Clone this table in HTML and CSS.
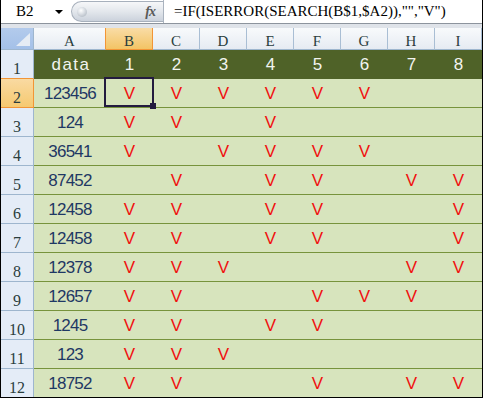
FILE: index.html
```html
<!DOCTYPE html>
<html>
<head>
<meta charset="utf-8">
<link rel="stylesheet" href="styles.css">
</head>
<body>
<div class="window">
  <div class="fbar">
    <div class="namebox"><span class="name">B2</span><span class="arrow"></span></div>
    <div class="pill"><span class="knob"></span><span class="fx">fx</span></div>
    <div class="formula">=IF(ISERROR(SEARCH(B$1,$A2)),"","V")</div>
  </div>
  <div class="band"></div>
  <div class="sheet">
    <div class="corner"></div>
    <div class="ch ch-a">A</div><div class="ch ch-sel">B</div><div class="ch">C</div><div class="ch">D</div><div class="ch">E</div><div class="ch">F</div><div class="ch">G</div><div class="ch">H</div><div class="ch">I</div>

    <div class="rh rh-1">1</div>
    <div class="c hd hd-data">data</div><div class="c hd">1</div><div class="c hd">2</div><div class="c hd">3</div><div class="c hd">4</div><div class="c hd">5</div><div class="c hd">6</div><div class="c hd">7</div><div class="c hd">8</div>

    <div class="rh rh-sel">2</div>
    <div class="c a">123456</div><div class="c v active">V</div><div class="c v">V</div><div class="c v">V</div><div class="c v">V</div><div class="c v">V</div><div class="c v">V</div><div class="c"></div><div class="c"></div>

    <div class="rh">3</div>
    <div class="c a">124</div><div class="c v">V</div><div class="c v">V</div><div class="c"></div><div class="c v">V</div><div class="c"></div><div class="c"></div><div class="c"></div><div class="c"></div>

    <div class="rh">4</div>
    <div class="c a">36541</div><div class="c v">V</div><div class="c"></div><div class="c v">V</div><div class="c v">V</div><div class="c v">V</div><div class="c v">V</div><div class="c"></div><div class="c"></div>

    <div class="rh">5</div>
    <div class="c a">87452</div><div class="c"></div><div class="c v">V</div><div class="c"></div><div class="c v">V</div><div class="c v">V</div><div class="c"></div><div class="c v">V</div><div class="c v">V</div>

    <div class="rh">6</div>
    <div class="c a">12458</div><div class="c v">V</div><div class="c v">V</div><div class="c"></div><div class="c v">V</div><div class="c v">V</div><div class="c"></div><div class="c"></div><div class="c v">V</div>

    <div class="rh">7</div>
    <div class="c a">12458</div><div class="c v">V</div><div class="c v">V</div><div class="c"></div><div class="c v">V</div><div class="c v">V</div><div class="c"></div><div class="c"></div><div class="c v">V</div>

    <div class="rh">8</div>
    <div class="c a">12378</div><div class="c v">V</div><div class="c v">V</div><div class="c v">V</div><div class="c"></div><div class="c"></div><div class="c"></div><div class="c v">V</div><div class="c v">V</div>

    <div class="rh">9</div>
    <div class="c a">12657</div><div class="c v">V</div><div class="c v">V</div><div class="c"></div><div class="c"></div><div class="c v">V</div><div class="c v">V</div><div class="c v">V</div><div class="c"></div>

    <div class="rh">10</div>
    <div class="c a">1245</div><div class="c v">V</div><div class="c v">V</div><div class="c"></div><div class="c v">V</div><div class="c v">V</div><div class="c"></div><div class="c"></div><div class="c"></div>

    <div class="rh">11</div>
    <div class="c a">123</div><div class="c v">V</div><div class="c v">V</div><div class="c v">V</div><div class="c"></div><div class="c"></div><div class="c"></div><div class="c"></div><div class="c"></div>

    <div class="rh">12</div>
    <div class="c a">18752</div><div class="c v">V</div><div class="c v">V</div><div class="c"></div><div class="c"></div><div class="c v">V</div><div class="c"></div><div class="c v">V</div><div class="c v">V</div>
  </div>
</div>
</body>
</html>
```

FILE: styles.css
```css
html, body {
  margin: 0;
  padding: 0;
  background: #ffffff;
}

.window {
  box-sizing: border-box;
  width: 483px;
  height: 398px;
  border-left: 1px solid #000;
  border-right: 1px solid #000;
  border-bottom: 1px solid #000;
  overflow: hidden;
  background: #ffffff;
}

/* formula bar */
.fbar {
  display: flex;
  height: 24px;
  box-sizing: border-box;
  border-bottom: 1px solid #8d949d;
  background: #ffffff;
}

.namebox {
  display: flex;
  align-items: center;
  width: 70px;
  flex: none;
  padding-left: 15px;
  box-sizing: border-box;
}

.name {
  font-family: "Liberation Serif", serif;
  font-size: 15px;
  line-height: 23px;
  color: #000;
}

.arrow {
  margin-left: auto;
  margin-right: 8px;
  width: 0;
  height: 0;
  border-left: 4px solid transparent;
  border-right: 4px solid transparent;
  border-top: 4px solid #000;
}

.pill {
  display: flex;
  align-items: center;
  justify-content: space-between;
  flex: none;
  width: 92px;
  height: 21px;
  margin-top: 1px;
  box-sizing: border-box;
  border: 1px solid #a7b0bc;
  border-right: none;
  border-radius: 11px 0 0 11px;
  background: linear-gradient(#f6f7f9, #e3e7ec 50%, #cbd2dc);
  padding: 0 8px 0 5px;
}

.knob {
  width: 10px;
  height: 10px;
  border-radius: 50%;
  background: radial-gradient(circle at 40% 35%, #ffffff 0%, #dfe3e8 35%, #a3acb7 100%);
}

.fx {
  font-family: "Liberation Serif", serif;
  font-style: italic;
  font-weight: bold;
  font-size: 14px;
  color: #5a5a5a;
  letter-spacing: -1px;
}

.formula {
  flex: 1;
  border-left: 1px solid #aab3bf;
  padding-left: 10px;
  font-family: "Liberation Serif", serif;
  font-size: 15px;
  line-height: 23px;
  color: #000;
  white-space: nowrap;
  overflow: hidden;
}

.band {
  height: 4px;
  background: #dfe3e9;
}

/* sheet grid */
.sheet {
  display: grid;
  grid-template-columns: 33px 72px repeat(8, 47px);
  grid-template-rows: 22px repeat(12, 29px);
}

.corner {
  position: relative;
  box-sizing: border-box;
  border-right: 1px solid #9eb6ce;
  border-bottom: 1px solid #9eb6ce;
  background: linear-gradient(#b3cbec, #a4c0e8);
}

.corner::after {
  content: "";
  position: absolute;
  right: 3px;
  bottom: 3px;
  width: 0;
  height: 0;
  border-left: 14px solid transparent;
  border-bottom: 13px solid #e6ecf4;
}

.ch {
  box-sizing: border-box;
  display: flex;
  align-items: flex-end;
  justify-content: center;
  border-right: 1px solid #a9bed4;
  border-bottom: 1px solid #9eb6ce;
  background: linear-gradient(#f8fafc, #e6ebf2);
  font-family: "Liberation Serif", serif;
  font-size: 15px;
  line-height: 16px;
  color: #2a3d3d;
}

.ch-a {
  border-right-color: #f29536;
}

.ch-sel {
  border-right-color: #f29536;
  border-bottom-color: #f29536;
  background: linear-gradient(#f9dca6, #f3c465);
}

.rh {
  box-sizing: border-box;
  display: flex;
  align-items: flex-end;
  justify-content: center;
  border-right: 1px solid #9eb6ce;
  border-bottom: 1px solid #9eb6ce;
  background: #e4ecf7;
  font-family: "Liberation Serif", serif;
  font-size: 16px;
  line-height: 18px;
  color: #2a3d3d;
}

.rh-1 {
  border-bottom-color: #f29536;
}

.rh-sel {
  border-right-color: #f29536;
  border-bottom-color: #f29536;
  background: linear-gradient(#f9daa2, #f6c970);
}

.c {
  box-sizing: border-box;
  display: flex;
  align-items: center;
  justify-content: center;
  padding-top: 2px;
  border-bottom: 1px solid #77933c;
  background: #d7e4bd;
  font-family: "Liberation Sans", Arial, sans-serif;
  font-size: 17px;
  color: #000;
  white-space: nowrap;
}

.c.hd {
  background: #4f6228;
  border-bottom-color: #4f6228;
  color: #f2f4f0;
}

.c.hd-data {
  letter-spacing: 1.5px;
  padding-left: 2px;
}

.c.a {
  color: #1f3864;
  letter-spacing: -0.8px;
}

.c.v {
  color: #f01010;
}

.c.active {
  position: relative;
}

.c.active::before {
  content: "";
  position: absolute;
  left: -2px;
  top: -2px;
  right: -1px;
  bottom: 0;
  border: 2px solid #231b3f;
  z-index: 2;
}

.c.active::after {
  content: "";
  position: absolute;
  right: -3px;
  bottom: -2px;
  width: 6px;
  height: 6px;
  background: #231b3f;
  z-index: 3;
}
```
